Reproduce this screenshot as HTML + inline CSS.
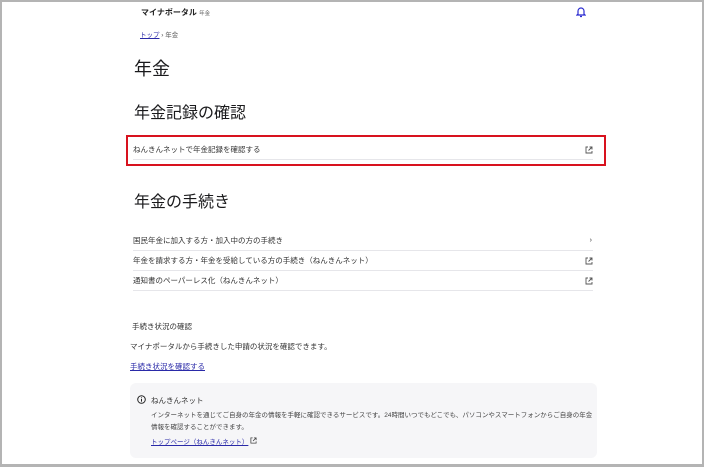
<!DOCTYPE html>
<html><head><meta charset="utf-8"><style>
*{margin:0;padding:0;box-sizing:border-box}
html,body{width:704px;height:467px;overflow:hidden;background:#fff}
body{font-family:"Liberation Sans","Noto Sans CJK JP",sans-serif;color:#1a1a1c;position:relative}
.frame{position:absolute;left:0;top:0;width:704px;height:467px;border:2px solid #b4b4b4;border-bottom-width:3px}
.a{position:absolute;white-space:nowrap}
.row{position:absolute;left:133px;width:460px;height:20px;border-bottom:1px solid #e6e6ea;font-size:7.5px;line-height:20px;color:#333}
.row svg{position:absolute;right:0;top:6px}
a{color:#2a2aa8;text-decoration:underline}
</style></head><body>
<div class="frame"></div>
<div class="a" style="left:141px;top:7px;font-size:8px;font-weight:bold;color:#222">マイナポータル <span style="font-size:5.5px;font-weight:normal;color:#666">年金</span></div>
<svg class="a" style="left:576px;top:6px" width="10" height="12" viewBox="0 0 10 12"><path d="M2 8V5a3 3 0 0 1 6 0v3l1 1H1z M4 10.5h2" fill="none" stroke="#2a2ad0" stroke-width="1.2"/></svg>
<div class="a" style="left:140px;top:29px;font-size:6.5px;color:#555"><a>トップ</a> › 年金</div>
<div class="a" style="left:134px;top:55px;font-size:18px">年金</div>
<div class="a" style="left:134px;top:99px;font-size:16px">年金記録の確認</div>
<div class="a" style="left:126px;top:135px;width:480px;height:31px;border:2px solid #d8121e"></div>
<div class="row" style="top:140px">ねんきんネットで年金記録を確認する<svg width="8" height="8" viewBox="0 0 8 8"><path d="M3 1H1v6h6V5M4.5 1H7v2.5M7 1L3.5 4.5" fill="none" stroke="#555" stroke-width="0.9"/></svg></div>
<div class="a" style="left:134px;top:188px;font-size:16px">年金の手続き</div>
<div class="row" style="top:231px">国民年金に加入する方・加入中の方の手続き<span style="position:absolute;right:1px;top:0;font-size:7px">›</span></div>
<div class="row" style="top:251px">年金を請求する方・年金を受給している方の手続き（ねんきんネット）<svg width="8" height="8" viewBox="0 0 8 8"><path d="M3 1H1v6h6V5M4.5 1H7v2.5M7 1L3.5 4.5" fill="none" stroke="#555" stroke-width="0.9"/></svg></div>
<div class="row" style="top:271px">通知書のペーパーレス化（ねんきんネット）<svg width="8" height="8" viewBox="0 0 8 8"><path d="M3 1H1v6h6V5M4.5 1H7v2.5M7 1L3.5 4.5" fill="none" stroke="#555" stroke-width="0.9"/></svg></div>
<div class="a" style="left:132px;top:321px;font-size:7.5px;color:#333">手続き状況の確認</div>
<div class="a" style="left:130px;top:341px;font-size:7.5px;color:#333">マイナポータルから手続きした申請の状況を確認できます。</div>
<div class="a" style="left:130px;top:361px;font-size:7.5px"><a>手続き状況を確認する</a></div>
<div class="a" style="left:130px;top:383px;width:467px;height:75px;background:#f6f6f8;border-radius:6px"></div>
<svg class="a" style="left:137px;top:395px" width="9" height="9" viewBox="0 0 9 9"><circle cx="4.5" cy="4.5" r="3.8" fill="none" stroke="#222" stroke-width="1"/><path d="M4.5 4v2.6M4.5 2.4v.8" stroke="#222" stroke-width="1"/></svg>
<div class="a" style="left:151px;top:395px;font-size:7.5px;color:#333">ねんきんネット</div>
<div class="a" style="left:151px;top:410px;font-size:6.5px;color:#444;line-height:12px">インターネットを通じてご自身の年金の情報を手軽に確認できるサービスです。24時間いつでもどこでも、パソコンやスマートフォンからご自身の年金<br>情報を確認することができます。</div>
<div class="a" style="left:151px;top:436px;font-size:6.5px"><a>トップページ（ねんきんネット）</a> <svg width="7" height="7" viewBox="0 0 8 8"><path d="M3 1H1v6h6V5M4.5 1H7v2.5M7 1L3.5 4.5" fill="none" stroke="#444" stroke-width="0.9"/></svg></div>
</body></html>
